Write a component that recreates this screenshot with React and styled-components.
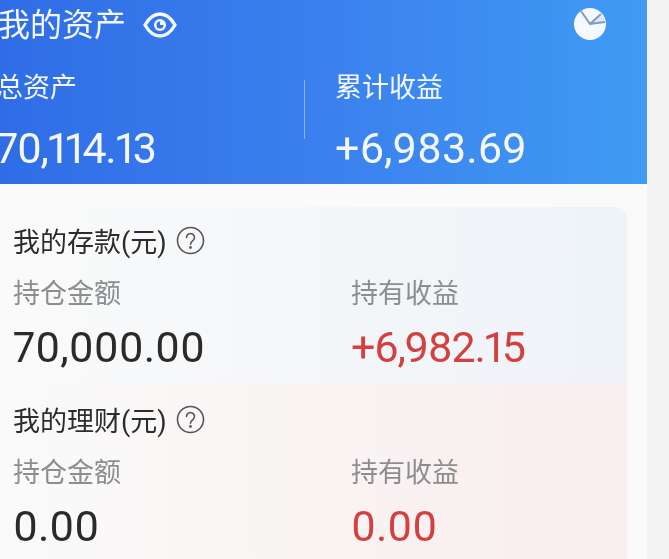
import styled, { createGlobalStyle } from "styled-components";

const Global = createGlobalStyle`
  html, body {
    margin: 0;
    padding: 0;
    background: #f4f4f4;
  }
  body {
    font-family: "Roboto", "Noto Sans CJK SC", sans-serif;
    font-variant-numeric: proportional-nums;
  }
`;

const Page = styled.div`
  width: 669px;
  height: 559px;
  overflow: hidden;
  background: #f4f4f4;
`;

const Screen = styled.div`
  width: 647px;
  height: 559px;
  overflow: hidden;
  background: #fafafa;
  filter: blur(0.4px);
`;

const Header = styled.header`
  box-sizing: border-box;
  height: 184px;
  padding-top: 6px;
  color: #f4f8fe;
  background: linear-gradient(90deg, #2f6de6 0%, #3b80ee 50%, #3f9bf3 100%);
`;

const TitleRow = styled.div`
  display: flex;
  align-items: center;
  justify-content: space-between;
  height: 36px;
  padding-right: 40px;
`;

const Title = styled.div`
  display: flex;
  align-items: center;
  gap: 17px;
  margin: 1px 0 0 -2px;
  font-size: 32px;
  line-height: 36px;
`;

const Totals = styled.div`
  display: flex;
  margin-top: 29px;
`;

const TotalCell = styled.div`
  flex: 0 0 ${(p) => p.$width}px;
  margin-left: ${(p) => p.$offset || 0}px;
`;

const Divider = styled.div`
  flex: 0 0 1px;
  height: 59px;
  margin-top: 9px;
  background: rgba(255, 255, 255, 0.4);
`;

const TotalLabel = styled.div`
  font-size: 27px;
  line-height: 34px;
  white-space: nowrap;
`;

const TotalValue = styled.div`
  margin-top: 19px;
  font-size: 43px;
  line-height: 48px;
  letter-spacing: ${(p) => p.$spacing || 0}px;
  white-space: nowrap;
`;

const Card = styled.section`
  width: 627px;
  height: 400px;
  margin-top: 23px;
  overflow: hidden;
  border-radius: 0 12px 12px 0;
`;

const Block = styled.div`
  box-sizing: border-box;
  height: ${(p) => p.$height}px;
  padding: ${(p) => p.$top}px 0 0 13px;
  background: linear-gradient(90deg, #fafafa 0%, ${(p) => p.$tint} 100%);
`;

const BlockTitle = styled.div`
  display: flex;
  align-items: center;
  gap: 9px;
  height: 32px;
  font-size: 27px;
  color: #2c2c2c;
`;

const Row = styled.div`
  display: grid;
  grid-template-columns: 338px 1fr;
  margin-top: 21px;
`;

const Label = styled.div`
  font-size: 27px;
  line-height: 34px;
  color: #8b8d8f;
`;

const Value = styled.div`
  margin-top: 12px;
  font-size: 43px;
  line-height: 48px;
  letter-spacing: ${(p) => p.$spacing || 0}px;
  color: ${(p) => (p.$red ? "#d4403f" : "#2a2a2a")};
`;

const EyeIcon = () => (
  <svg width="34" height="28" viewBox="0 0 34 28" fill="none">
    <path d="M2 14C6 7 11 3 17 3s11 4 15 11c-4 7-9 11-15 11S6 21 2 14Z" stroke="currentColor" strokeWidth="3.4" />
    <circle cx="17" cy="14" r="6" fill="currentColor" />
    <path d="M17 10.5a3.5 3.5 0 1 0 3.5 3.5h-3.5Z" fill="#3272e8" />
  </svg>
);

const PieIcon = () => (
  <svg width="34" height="34" viewBox="0 0 34 34">
    <circle cx="17" cy="17" r="16" fill="#f5f9fe" />
    <path d="M17 17 28 7A16 16 0 0 1 32 15Z" fill="#dbe8f6" />
    <path d="M8 4 17 17 32 15M17 17 28 7" fill="none" stroke="#7f9cc0" strokeWidth="2" />
  </svg>
);

const HelpIcon = () => (
  <svg width="29" height="29" viewBox="0 0 29 29" fill="none" stroke="#555" strokeWidth="1.6">
    <circle cx="14.5" cy="14.5" r="13" />
    <path d="M10.5 11.5a4 4 0 1 1 6.4 3.2c-1.5 1.1-2.4 1.9-2.4 3.6" strokeLinecap="round" />
    <circle cx="14.5" cy="21.5" r="0.6" fill="#555" />
  </svg>
);

const holdings = [
  { title: "我的存款(元)", amount: "70,000.00", profit: "+6,982.15", spacing: -1.3, tint: "#eef3f8", height: 176, top: 17 },
  { title: "我的理财(元)", amount: "0.00", profit: "0.00", spacing: 0, tint: "#f9eded", height: 224, top: 20 },
];

export default function App() {
  return (
    <Page>
      <Global />
      <Screen>
        <Header>
          <TitleRow>
            <Title>
              我的资产
              <EyeIcon />
            </Title>
            <PieIcon />
          </TitleRow>
          <Totals>
            <TotalCell $width={308} $offset={-4}>
              <TotalLabel>总资产</TotalLabel>
              <TotalValue $spacing={-1.3}>70,114.13</TotalValue>
            </TotalCell>
            <Divider />
            <TotalCell $width={300} $offset={30}>
              <TotalLabel>累计收益</TotalLabel>
              <TotalValue>+6,983.69</TotalValue>
            </TotalCell>
          </Totals>
        </Header>
        <Card>
          {holdings.map((h) => (
            <Block key={h.title} $height={h.height} $top={h.top} $tint={h.tint}>
              <BlockTitle>
                {h.title}
                <HelpIcon />
              </BlockTitle>
              <Row>
                <div>
                  <Label>持仓金额</Label>
                  <Value>{h.amount}</Value>
                </div>
                <div>
                  <Label>持有收益</Label>
                  <Value $red $spacing={h.spacing}>{h.profit}</Value>
                </div>
              </Row>
            </Block>
          ))}
        </Card>
      </Screen>
    </Page>
  );
}
